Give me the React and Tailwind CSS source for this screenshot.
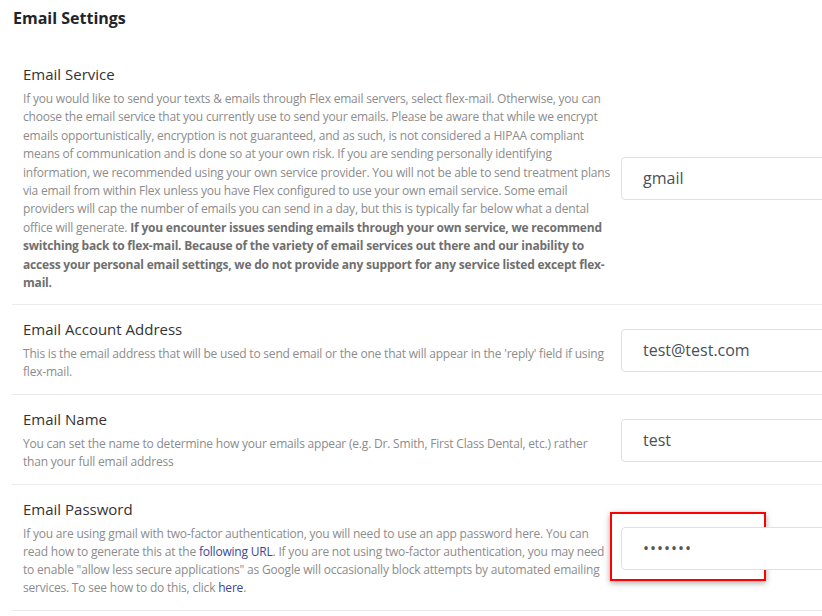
import React from 'react'

const rows = [
    {
        title: 'Email Service',
        value: 'gmail',
        desc: (
            <>
                If you would like to send your texts &amp; emails through Flex email servers, select flex-mail. Otherwise, you can choose the email service that you currently use to send your emails. Please be aware that while we encrypt emails opportunistically, encryption is not guaranteed, and as such, is not considered a HIPAA compliant means of communication and is done so at your own risk. If you are sending personally identifying information, we recommended using your own service provider. You will not be able to send treatment plans via email from within Flex unless you have Flex configured to use your own email service. Some email providers will cap the number of emails you can send in a day, but this is typically far below what a dental office will generate.{' '}
                <b className="font-bold text-[#6f6f6f]">If you encounter issues sending emails through your own service, we recommend switching back to flex-mail. Because of the variety of email services out there and our inability to access your personal email settings, we do not provide any support for any service listed except flex-mail.</b>
            </>
        ),
    },
    {
        title: 'Email Account Address',
        value: 'test@test.com',
        desc: "This is the email address that will be used to send email or the one that will appear in the 'reply' field if using flex-mail.",
    },
    {
        title: 'Email Name',
        value: 'test',
        desc: 'You can set the name to determine how your emails appear (e.g. Dr. Smith, First Class Dental, etc.) rather than your full email address',
    },
    {
        title: 'Email Password',
        value: '•••••••',
        password: true,
        desc: (
            <>
                If you are using gmail with two-factor authentication, you will need to use an app password here. You can read how to generate this at the <a className="text-[#3a4796]">following URL</a>. If you are not using two-factor authentication, you may need to enable "allow less secure applications" as Google will occasionally block attempts by automated emailing services. To see how to do this, click <a className="text-[#3a4796]">here</a>.
            </>
        ),
    },
]

function App () {
    return (
        <div className="w-[822px] h-[616px] overflow-hidden bg-white font-['Open_Sans',sans-serif]">
            <h1 className="pl-[13px] pt-[7px] text-[16px] leading-[22px] font-bold text-[#212529]">Email Settings</h1>
            <div className="w-[960px] pl-3 mt-[19px]">
                {rows.map(({ title, value, desc, password }, i) => (
                    <div key={title} className={`flex items-center pl-[11px] border-b border-[#ebebeb] ${i === 0 ? 'pt-[16px] pb-[12px]' : 'pt-[14px] pb-[13px]'}`}>
                        <div className="w-[588px] shrink-0">
                            <h2 className="text-[15px] leading-[20px] text-[#333]">{title}</h2>
                            <p className={`mt-[6px] text-[12px] text-[#8c8c8c] tracking-[-0.2px] ${i === 0 ? 'leading-[18.4px]' : 'leading-[18px]'}`}>{desc}</p>
                        </div>
                        <div className="ml-[10px] relative">
                            {password && (
                                <div className="absolute left-[-11px] top-[-15px] w-[156px] h-[69px] border-2 border-[#ff0000] shadow-[0_2px_6px_rgba(0,0,0,0.35)]"></div>
                            )}
                            <div className={`relative w-[300px] h-[43px] flex items-center pl-[21px] border border-[#e0e0e0] rounded-[4px] bg-white text-[16px] ${password ? 'text-[#555] text-[11px] tracking-[1px]' : 'text-[#495057]'}`}>
                                {value}
                            </div>
                        </div>
                    </div>
                ))}
            </div>
        </div>
    )
}

export default App
